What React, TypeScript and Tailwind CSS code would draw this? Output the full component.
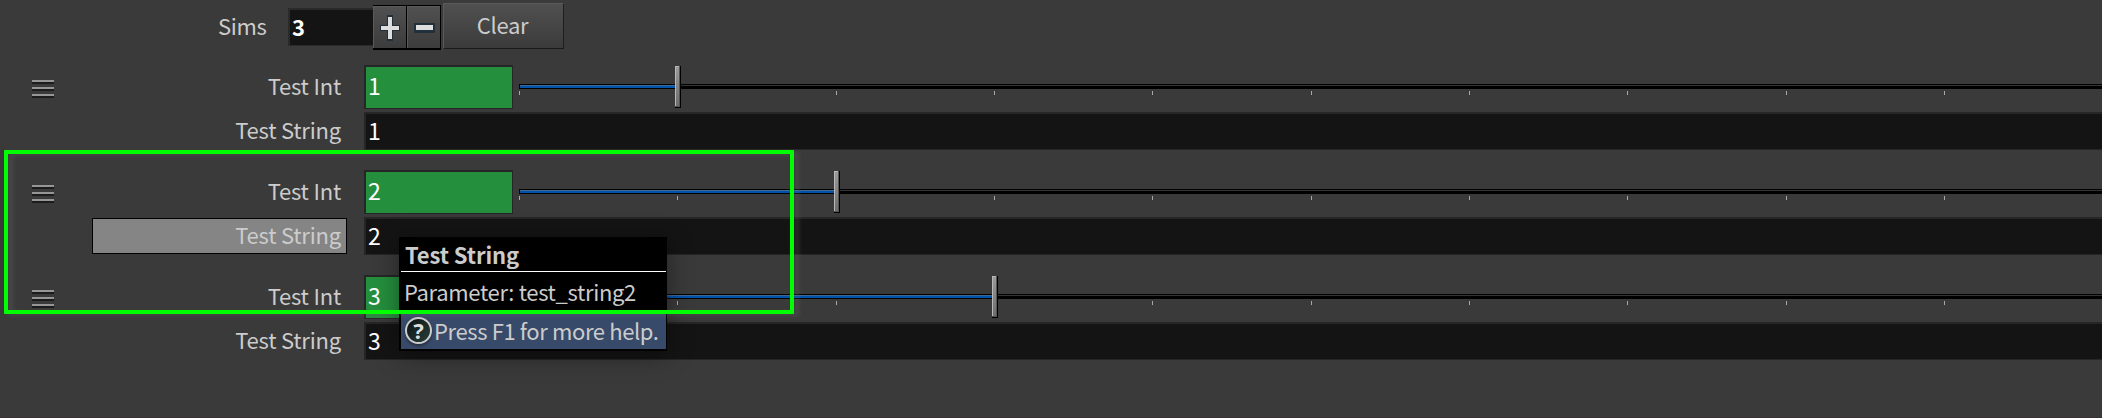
import type { ReactNode } from "react";

const TICKS = Array.from({ length: 10 }, (_, i) => i);

function Label({ children, active = false }: { children: ReactNode; active?: boolean }) {
  return (
    <div
      className={
        active
          ? "flex h-9 w-[255px] items-center justify-end border border-black bg-[#858585] pr-[5px] tracking-[-0.2px] text-[#cccccc]"
          : "flex h-9 w-[255px] items-center justify-end border border-transparent pr-[5px] tracking-[-0.2px] text-[#cccccc]"
      }
    >
      <span className="relative -top-0.5">{children}</span>
    </div>
  );
}

function DragHandle() {
  return (
    <div className="ml-8 flex h-11 w-[22px] shrink-0 flex-col gap-[3px] pt-[15px]">
      {[0, 1, 2].map((n) => (
        <div key={n} className="h-1 w-full border-t-2 border-b-2 border-t-[#969696] border-b-[#1c1c1c]" />
      ))}
    </div>
  );
}

function Slider({ value }: { value: number }) {
  const position = (value * 1425) / 9;
  return (
    <div className="relative ml-1.5 h-11 flex-1">
      <div className="mt-[19px] flex h-[5px] w-full flex-col border-y border-l border-black bg-black">
        <div className="h-px w-full bg-[#343434]" />
      </div>
      <div
        className="absolute top-5 left-px h-[3px] border-t border-[#41688f] bg-[#0052ab]"
        style={{ width: position - 2 }}
      />
      {TICKS.map((t) => (
        <div
          key={t}
          className="absolute top-[26px] h-1 w-px bg-[#a8a8a8]"
          style={{ left: Math.floor((t * 1425) / 9 + 0.34) }}
        />
      ))}
      <div
        className="absolute top-px flex h-[42px] w-1.5 border-r border-b border-black bg-[#555555]"
        style={{ left: Math.round(position) - 2 }}
      >
        <div className="h-10 w-1 border-t border-l border-[#b8b8b8] bg-linear-to-b from-[#9a9a9a] to-[#6e6e6e]" />
      </div>
    </div>
  );
}

function Entry({ value, active = false }: { value: number; active?: boolean }) {
  return (
    <div className="flex h-[105px] flex-col gap-[3px]">
      <div className="flex h-11">
        <DragHandle />
        <div className="ml-[38px] flex items-center">
          <Label>Test Int</Label>
        </div>
        <div className="ml-[17px] flex h-11 w-[149px] items-center border border-t-2 border-l-2 border-[#262626] bg-[#248f3d] pl-0.5 text-[23px] text-white">
          <span className="relative -top-[3px]">{value}</span>
        </div>
        <Slider value={value} />
      </div>
      <div className="flex h-[38px]">
        <div className="ml-[92px] flex pt-px">
          <Label active={active}>Test String</Label>
        </div>
        <div className="ml-[17px] flex flex-1 items-center border-t-2 border-b border-l-2 border-[#262626] bg-[#141414] pl-0.5 text-[23px] text-white">
          <span className="relative -top-0.5">{value}</span>
        </div>
      </div>
    </div>
  );
}

function Toolbar() {
  return (
    <div className="flex h-[65px] items-start">
      <span className="ml-[218px] w-[70px] pt-[7px] leading-9 text-[#cccccc]">Sims</span>
      <div className="mt-2 h-[38px] w-[85px] border border-t-2 border-r-0 border-l-2 border-[#2a2a2a] bg-[#141414] pl-0.5 font-bold text-white">
        <span className="block leading-[32px]">3</span>
      </div>
      <div className="mt-[5px] flex h-[45px] w-[68px] gap-px border border-l-0 border-black bg-black pb-px">
        <div className="flex flex-1 items-center justify-center border-t border-l border-[#5a5a5a] bg-linear-to-b from-[#505050] to-[#3c3c3c]">
          <svg width="20" height="26" viewBox="0 0 20 26">
            <path d="M7 0h6v10h7v6h-7v10H7V16H0v-6h7z" fill="#22303c" />
            <path d="M8 2h4v9h7v4h-7v9H8v-9H1v-4h7z" fill="#dedede" />
          </svg>
        </div>
        <div className="flex flex-1 items-center justify-center border-t border-l border-[#5a5a5a] bg-linear-to-b from-[#505050] to-[#3c3c3c]">
          <svg width="21" height="10" viewBox="0 0 21 10">
            <path d="M0 0h21v10H0z" fill="#22303c" />
            <path d="M2 2h17v5H2z" fill="#dedede" />
          </svg>
        </div>
      </div>
      <div className="mt-[3px] ml-0.5 h-[46px] w-[121px] border border-t-[#5a5a5a] border-r-[#1e1e1e] border-b-[#1a1a1a] border-l-[#5a5a5a] bg-linear-to-b from-[#505050] to-[#3b3b3b] pr-0.5 text-center leading-[41px] text-[#cccccc]">
        Clear
      </div>
    </div>
  );
}

function Tooltip() {
  return (
    <div className="absolute top-[237px] left-[399px] h-[114px] w-[268px] bg-black pr-px pl-0.5 text-[#cccccc] shadow-[0_4px_24px_rgba(0,0,0,0.4)]">
      <div className="h-[35px] border-b border-white pl-1 font-bold tracking-[-0.1px] leading-[35px]">Test String</div>
      <div className="h-10 pl-[3px] leading-[38px]">Parameter: test_string2</div>
      <div className="flex h-[37px] w-[265px] items-center bg-[#384a69] pl-1">
        <div className="flex size-[27px] items-center justify-center rounded-full border-2 border-[#cccccc] bg-linear-to-br from-[#0e1414] to-[#26403c] shadow-[0_2px_3px_rgba(0,0,0,0.4)]">
          <span className="font-['Noto_Sans',sans-serif] text-[22px] leading-[23px] font-bold tracking-normal text-[#dedede]">?</span>
        </div>
        <span className="relative -top-px pl-0.5 tracking-[-0.38px] leading-[34px]">Press F1 for more help.</span>
      </div>
    </div>
  );
}

export default function App() {
  return (
    <div className="relative h-[418px] w-full overflow-hidden border-b border-[#3a2f34] bg-[#3a3a3a] font-['Noto_Sans_CJK_SC','Noto_Sans',sans-serif] text-[22px] leading-8 tracking-[-0.33px] whitespace-nowrap">
      <Toolbar />
      <Entry value={1} />
      <Entry value={2} active />
      <Entry value={3} />
      <Tooltip />
      <div className="absolute top-[150px] left-1 h-[164px] w-[790px] rounded-[1px] border-4 border-[#00ff00] drop-shadow-[5px_2px_2px_rgba(110,110,110,0.3)]" />
    </div>
  );
}
